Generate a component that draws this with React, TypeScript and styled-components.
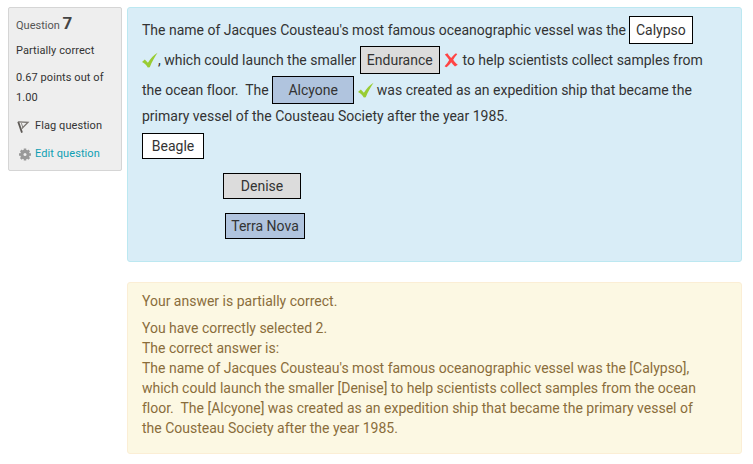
import React from "react";
import styled, { createGlobalStyle } from "styled-components";

const Global = createGlobalStyle`
  * { box-sizing: border-box; }
  body {
    margin: 0;
    background: #fff;
    font-family: Roboto, "Liberation Sans", sans-serif;
    color: #333;
  }
`;

const Page = styled.main`
  display: flex;
  align-items: flex-start;
  gap: 5px;
  padding: 7px 11px 0 8px;
`;

const Info = styled.aside`
  width: 114px;
  height: 164px;
  border: 1px solid #d5d5d5;
  border-radius: 2px;
  background: #eee;
  padding: 4px 7px;
  font-size: 11px;
  line-height: 20px;
  letter-spacing: 0.08px;
`;

const Heading = styled.h3`
  margin: 0;
  font-weight: 400;
  font-size: 11px;
  line-height: 22px;
  color: #555;
  letter-spacing: 0;
`;

const Num = styled.span`
  font-size: 17px;
  font-weight: 700;
  color: #444;
`;

const InfoRow = styled.div<{ $top: number }>`
  margin-top: ${(p) => p.$top}px;
`;

const Action = styled.a<{ $link?: boolean }>`
  display: flex;
  align-items: center;
  height: 20px;
  margin-top: 8px;
  gap: 4px;
  color: ${(p) => (p.$link ? "#0f9fb3" : "#333")};
  white-space: nowrap;

  svg {
    flex: none;
    margin-left: 1px;
  }
`;

const Content = styled.div`
  flex: 1;
  display: flex;
  flex-direction: column;
  gap: 20px;
`;

const Panel = styled.section`
  border: 1px solid;
  border-radius: 3px;
  font-size: 14px;
  letter-spacing: -0.004px;
`;

const Formulation = styled(Panel)`
  height: 255px;
  border-color: #bce8f1;
  background: #d9edf7;
  padding: 7px 14px;
`;

const Feedback = styled(Panel)`
  height: 172px;
  border-color: #fbeed5;
  background: #fcf8e3;
  color: #8a6d3b;
  padding: 8px 14px;
  line-height: 20px;
  white-space: pre;
`;

const Summary = styled.p`
  margin: 0 0 7px;
`;

const Line = styled.div<{ $h?: number }>`
  display: flex;
  align-items: center;
  height: ${(p) => p.$h ?? 30}px;
  white-space: pre;

  svg {
    flex: none;
  }
`;

const Box = styled.span<{ $w: number; $bg: string; $h?: number }>`
  display: flex;
  align-items: center;
  justify-content: center;
  flex: none;
  width: ${(p) => p.$w}px;
  height: ${(p) => p.$h ?? 28}px;
  border: 1px solid #000;
  background: ${(p) => p.$bg};
`;

const Blank = styled(Box)<{ $pull?: number; $after?: number }>`
  margin-left: ${(p) => p.$pull ?? 0}px;
  margin-right: ${(p) => p.$after ?? 0}px;
`;

const AfterMark = styled.span`
  margin-left: -0.8px;
`;

const Choices = styled.div`
  display: flex;
  flex-direction: column;
  gap: 14px;
  margin-top: 6px;
`;

const Choice = styled(Box)<{ $indent: number }>`
  margin-left: ${(p) => p.$indent}px;
`;

const WHITE = "#fff";
const GREY = "#dcdcdc";
const BLUE = "#b0c4de";

const Check = () => (
  <svg width="16" height="16" viewBox="0 0 16 16">
    <path d="M0 10.1 2.8 7.6l3.1 3.2C8.6 6.3 11.6 3.3 15.5 .8 12.5 5.3 9.9 9.9 7.8 15.2L5.8 15.6C4.4 13.2 2.5 11.4 0 10.1Z" fill="#99cc33" />
  </svg>
);

const Cross = () => (
  <svg width="16" height="16" viewBox="0 0 16 16">
    <path d="M.8 2.4 3.4 1.2C4.4 3 5.6 4.5 7.2 5.9 8.6 4.1 10 2.6 12 1.2L13.2 2.2C11.5 4 10.2 5.8 9.2 7.7 10.4 9.6 12 11.4 13.8 12.8L11 14.6C9.5 13.3 8.3 11.8 7.2 10.2 5.8 12.2 4.3 13.8 2.3 15.2L.6 14.2C2.5 12.4 4 10.4 5.2 8.1 4 6 2.5 4.1 .8 2.4Z" fill="#ff4545" />
  </svg>
);

const Flag = () => (
  <svg width="14" height="14" viewBox="0 0 14 14" fill="none">
    <path d="M1.2 2.8 5 13.6" stroke="#5d5955" strokeWidth="1.8" />
    <path d="M1.3 2.8 11 3.3 4.8 9.6" stroke="#77736f" strokeWidth="1.3" />
    <path d="M4.4 4.2 5.7 8" stroke="#88847f" strokeWidth="1" />
  </svg>
);

const Gear = () => (
  <svg width="14" height="14" viewBox="0 0 14 14">
    <path d="M8 1.6v12M2 7.6h12M3.8 3.4l8.4 8.4M12.2 3.4l-8.4 8.4" stroke="#999" strokeWidth="2.5" />
    <circle cx="8" cy="7.6" r="4.8" fill="#999" />
    <circle cx="8" cy="7.6" r="1.5" fill="#eee" />
  </svg>
);

export default function App() {
  return (
    <>
      <Global />
      <Page>
        <Info>
          <Heading>Question <Num>7</Num></Heading>
          <InfoRow $top={4}>Partially correct</InfoRow>
          <InfoRow $top={7}>0.67 points out of 1.00</InfoRow>
          <Action><Flag />Flag question</Action>
          <Action $link><Gear />Edit question</Action>
        </Info>
        <Content>
          <Formulation>
            <Line>
              The name of Jacques Cousteau's most famous oceanographic vessel was the{" "}
              <Blank $w={64} $bg={WHITE} $pull={-0.5}>Calypso</Blank>
            </Line>
            <Line>
              <Check />, which could launch the smaller{" "}
              <Blank $w={80} $bg={GREY} $after={4}>Endurance</Blank>
              <Cross />
              <AfterMark>{" to help scientists collect samples from"}</AfterMark>
            </Line>
            <Line>
              the ocean floor.{"  "}The{" "}
              <Blank $w={82} $bg={BLUE} $after={4}>Alcyone</Blank>
              <Check />
              <AfterMark>{" was created as an expedition ship that became the"}</AfterMark>
            </Line>
            <Line $h={22}>primary vessel of the Cousteau Society after the year 1985.</Line>
            <Choices>
              <Choice $w={62} $h={26} $bg={WHITE} $indent={0}>Beagle</Choice>
              <Choice $w={78} $h={26} $bg={GREY} $indent={81}>Denise</Choice>
              <Choice $w={80} $h={26} $bg={BLUE} $indent={83}>Terra Nova</Choice>
            </Choices>
          </Formulation>
          <Feedback>
            <Summary>Your answer is partially correct.</Summary>
            <div>You have correctly selected 2.</div>
            <div>The correct answer is:</div>
            <div>The name of Jacques Cousteau's most famous oceanographic vessel was the [Calypso],</div>
            <div>which could launch the smaller [Denise] to help scientists collect samples from the ocean</div>
            <div>floor.{"  "}The [Alcyone] was created as an expedition ship that became the primary vessel of</div>
            <div>the Cousteau Society after the year 1985.</div>
          </Feedback>
        </Content>
      </Page>
    </>
  );
}
